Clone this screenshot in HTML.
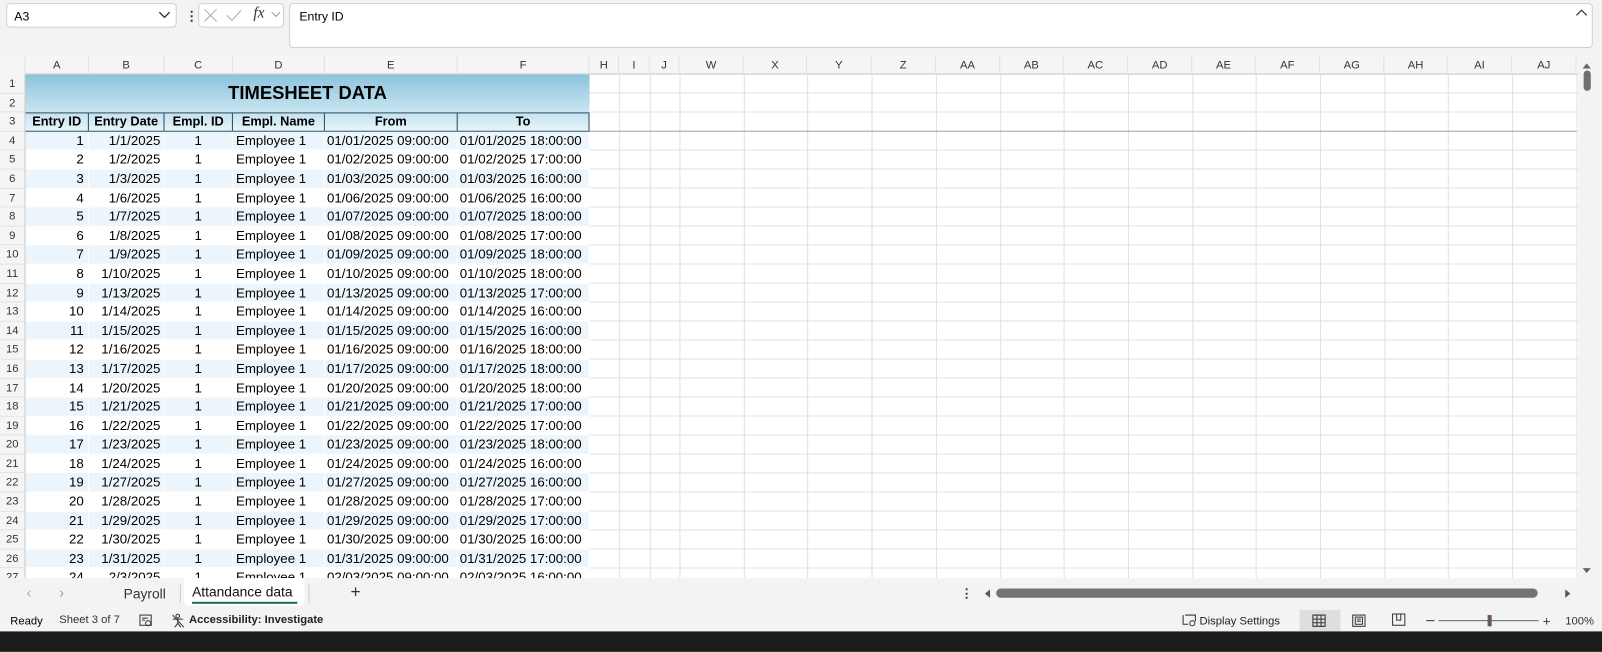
<!DOCTYPE html>
<html><head><meta charset="utf-8">
<style>
*{box-sizing:border-box;margin:0;padding:0}
body{width:1602px;height:638px;overflow:hidden;background:#f3f3f3;font-family:"Liberation Sans",sans-serif;position:relative;color:#000}
#wrap{position:absolute;left:0;top:0;width:1568px;height:625px;transform:scale(1.0217);transform-origin:0 0}
.abs{position:absolute}
.box{position:absolute;background:#fff;border:1px solid #d0d0d0;border-radius:4px}
#sheet{position:absolute;left:0;top:55px;width:1560px;height:511px;background:#fff;overflow:hidden}
#colhdr{position:absolute;left:0;top:0;height:18px;width:1545px;background:#f5f5f5;border-bottom:1px solid #c8c8c8;font-size:11px;color:#333}
#colhdr div{position:absolute;top:0;height:18px;line-height:18px;text-align:center;border-right:1px solid #e0e0e0}
#rowhdr{position:absolute;left:0;top:18px;width:25px;background:#f5f5f5;border-right:1px solid #c8c8c8;font-size:11px;color:#333}
#rowhdr div{height:18.6px;line-height:18.6px;text-align:center;border-bottom:1px solid #e3e3e3}
#grid{position:absolute;left:577px;top:18px;width:968px;height:500px;background:repeating-linear-gradient(to bottom,transparent 0,transparent 17.6px,#e1e1e1 17.6px,#e1e1e1 18.6px)}
.vl{position:absolute;top:18px;width:1px;height:500px;background:#e1e1e1}
#data{position:absolute;left:25px;top:18px;width:552px;font-size:13px}
.r{display:flex;height:18.6px;line-height:18px;border-bottom:1px solid #fff}
.r div{overflow:hidden;white-space:nowrap;border-right:1px solid #fff}
.r.b{background:#ebf5fb}
.c1{width:62px;text-align:right;padding-right:4px}
.c2{width:74px;text-align:right;padding-right:3px}
.c3{width:67px;text-align:center}
.c4{width:90px;padding-left:3px}
.c5{width:130px;padding-left:2px}
.c6{width:129px;padding-left:2px}
#title{height:37.2px;background:linear-gradient(#8cc3dc,#c9e6f2);text-align:center;font-weight:bold;font-size:18px;line-height:37px}
.h{background:linear-gradient(#c5e3f0,#e6f4fa);font-weight:bold;font-size:12.5px;height:18.6px;display:flex;line-height:17px;border-top:1px solid #2b4a5c;border-bottom:1px solid #2b4a5c}
.h div{text-align:center;border-right:1px solid #2b4a5c;padding:0;white-space:nowrap;overflow:hidden}
</style></head><body><div id="wrap">
<!-- formula bar -->
<div class="box" style="left:6px;top:3px;width:167px;height:24px"></div>
<div class="abs" style="left:14px;top:9px;font-size:12px">A3</div>
<svg class="abs" style="left:155px;top:11px" width="12" height="8"><path d="M1 1 L6 6 L11 1" stroke="#333" fill="none" stroke-width="1.3"/></svg>
<div class="abs" style="left:181px;top:8px;font-size:13px;color:#333;font-weight:bold">⋮</div>
<div class="box" style="left:194px;top:3px;width:84px;height:24px"></div>
<svg class="abs" style="left:199px;top:8px" width="80" height="14"><path d="M1 1 L13 13 M13 1 L1 13" stroke="#aaa" fill="none"/><path d="M23 7 L28 12 L37 2" stroke="#aaa" fill="none"/></svg>
<div class="abs" style="left:248px;top:5px;font-family:'Liberation Serif',serif;font-style:italic;font-size:15px;color:#333">fx</div>
<svg class="abs" style="left:265px;top:11px" width="10" height="7"><path d="M1 1 L5 5 L9 1" stroke="#999" fill="none"/></svg>
<div class="box" style="left:283px;top:3px;width:1276px;height:44px"></div>
<div class="abs" style="left:293px;top:9px;font-size:12px">Entry ID</div>
<svg class="abs" style="left:1542px;top:8px" width="12" height="8"><path d="M1 7 L6 2 L11 7" stroke="#333" fill="none" stroke-width="1.2"/></svg>

<div id="sheet">
<div id="colhdr">
<div style="left:0;width:25px;background:#f5f5f5"></div>
<div style="left:25px;width:62px">A</div><div style="left:87px;width:74px">B</div><div style="left:161px;width:67px">C</div><div style="left:228px;width:90px">D</div><div style="left:318px;width:130px">E</div><div style="left:448px;width:129px">F</div><div style="left:577px;width:29px">H</div><div style="left:606px;width:30px">I</div><div style="left:636px;width:29px">J</div><div style="left:665px;width:63px">W</div><div style="left:728px;width:62px">X</div><div style="left:790px;width:63px">Y</div><div style="left:853px;width:63px">Z</div><div style="left:916px;width:63px">AA</div><div style="left:979px;width:62px">AB</div><div style="left:1041px;width:63px">AC</div><div style="left:1104px;width:63px">AD</div><div style="left:1167px;width:62px">AE</div><div style="left:1229px;width:63px">AF</div><div style="left:1292px;width:63px">AG</div><div style="left:1355px;width:62px">AH</div><div style="left:1417px;width:63px">AI</div><div style="left:1480px;width:63px">AJ</div>
</div>
<div id="grid"></div>
<div class="vl" style="left:606px"></div><div class="vl" style="left:636px"></div><div class="vl" style="left:665px"></div><div class="vl" style="left:728px"></div><div class="vl" style="left:790px"></div><div class="vl" style="left:853px"></div><div class="vl" style="left:916px"></div><div class="vl" style="left:979px"></div><div class="vl" style="left:1041px"></div><div class="vl" style="left:1104px"></div><div class="vl" style="left:1167px"></div><div class="vl" style="left:1229px"></div><div class="vl" style="left:1292px"></div><div class="vl" style="left:1355px"></div><div class="vl" style="left:1417px"></div><div class="vl" style="left:1480px"></div><div class="vl" style="left:1543px"></div>
<div class="abs" style="left:25px;top:73px;width:1518px;height:1px;background:#a8a8a8"></div>
<div id="rowhdr">
<div>1</div><div>2</div><div>3</div><div>4</div><div>5</div><div>6</div><div>7</div><div>8</div><div>9</div><div>10</div><div>11</div><div>12</div><div>13</div><div>14</div><div>15</div><div>16</div><div>17</div><div>18</div><div>19</div><div>20</div><div>21</div><div>22</div><div>23</div><div>24</div><div>25</div><div>26</div><div>27</div>
</div>
<div id="data">
<div id="title">TIMESHEET DATA</div>
<div class="h"><div class="c1" style="text-align:center;padding:0">Entry ID</div><div class="c2" style="text-align:center;padding:0">Entry Date</div><div class="c3">Empl. ID</div><div class="c4" style="padding:0">Empl. Name</div><div class="c5" style="padding:0">From</div><div class="c6" style="padding:0">To</div></div>
<div class="r b"><div class="c1">1</div><div class="c2">1/1/2025</div><div class="c3">1</div><div class="c4">Employee 1</div><div class="c5">01/01/2025 09:00:00</div><div class="c6">01/01/2025 18:00:00</div></div>
<div class="r"><div class="c1">2</div><div class="c2">1/2/2025</div><div class="c3">1</div><div class="c4">Employee 1</div><div class="c5">01/02/2025 09:00:00</div><div class="c6">01/02/2025 17:00:00</div></div>
<div class="r b"><div class="c1">3</div><div class="c2">1/3/2025</div><div class="c3">1</div><div class="c4">Employee 1</div><div class="c5">01/03/2025 09:00:00</div><div class="c6">01/03/2025 16:00:00</div></div>
<div class="r"><div class="c1">4</div><div class="c2">1/6/2025</div><div class="c3">1</div><div class="c4">Employee 1</div><div class="c5">01/06/2025 09:00:00</div><div class="c6">01/06/2025 16:00:00</div></div>
<div class="r b"><div class="c1">5</div><div class="c2">1/7/2025</div><div class="c3">1</div><div class="c4">Employee 1</div><div class="c5">01/07/2025 09:00:00</div><div class="c6">01/07/2025 18:00:00</div></div>
<div class="r"><div class="c1">6</div><div class="c2">1/8/2025</div><div class="c3">1</div><div class="c4">Employee 1</div><div class="c5">01/08/2025 09:00:00</div><div class="c6">01/08/2025 17:00:00</div></div>
<div class="r b"><div class="c1">7</div><div class="c2">1/9/2025</div><div class="c3">1</div><div class="c4">Employee 1</div><div class="c5">01/09/2025 09:00:00</div><div class="c6">01/09/2025 18:00:00</div></div>
<div class="r"><div class="c1">8</div><div class="c2">1/10/2025</div><div class="c3">1</div><div class="c4">Employee 1</div><div class="c5">01/10/2025 09:00:00</div><div class="c6">01/10/2025 18:00:00</div></div>
<div class="r b"><div class="c1">9</div><div class="c2">1/13/2025</div><div class="c3">1</div><div class="c4">Employee 1</div><div class="c5">01/13/2025 09:00:00</div><div class="c6">01/13/2025 17:00:00</div></div>
<div class="r"><div class="c1">10</div><div class="c2">1/14/2025</div><div class="c3">1</div><div class="c4">Employee 1</div><div class="c5">01/14/2025 09:00:00</div><div class="c6">01/14/2025 16:00:00</div></div>
<div class="r b"><div class="c1">11</div><div class="c2">1/15/2025</div><div class="c3">1</div><div class="c4">Employee 1</div><div class="c5">01/15/2025 09:00:00</div><div class="c6">01/15/2025 16:00:00</div></div>
<div class="r"><div class="c1">12</div><div class="c2">1/16/2025</div><div class="c3">1</div><div class="c4">Employee 1</div><div class="c5">01/16/2025 09:00:00</div><div class="c6">01/16/2025 18:00:00</div></div>
<div class="r b"><div class="c1">13</div><div class="c2">1/17/2025</div><div class="c3">1</div><div class="c4">Employee 1</div><div class="c5">01/17/2025 09:00:00</div><div class="c6">01/17/2025 18:00:00</div></div>
<div class="r"><div class="c1">14</div><div class="c2">1/20/2025</div><div class="c3">1</div><div class="c4">Employee 1</div><div class="c5">01/20/2025 09:00:00</div><div class="c6">01/20/2025 18:00:00</div></div>
<div class="r b"><div class="c1">15</div><div class="c2">1/21/2025</div><div class="c3">1</div><div class="c4">Employee 1</div><div class="c5">01/21/2025 09:00:00</div><div class="c6">01/21/2025 17:00:00</div></div>
<div class="r"><div class="c1">16</div><div class="c2">1/22/2025</div><div class="c3">1</div><div class="c4">Employee 1</div><div class="c5">01/22/2025 09:00:00</div><div class="c6">01/22/2025 17:00:00</div></div>
<div class="r b"><div class="c1">17</div><div class="c2">1/23/2025</div><div class="c3">1</div><div class="c4">Employee 1</div><div class="c5">01/23/2025 09:00:00</div><div class="c6">01/23/2025 18:00:00</div></div>
<div class="r"><div class="c1">18</div><div class="c2">1/24/2025</div><div class="c3">1</div><div class="c4">Employee 1</div><div class="c5">01/24/2025 09:00:00</div><div class="c6">01/24/2025 16:00:00</div></div>
<div class="r b"><div class="c1">19</div><div class="c2">1/27/2025</div><div class="c3">1</div><div class="c4">Employee 1</div><div class="c5">01/27/2025 09:00:00</div><div class="c6">01/27/2025 16:00:00</div></div>
<div class="r"><div class="c1">20</div><div class="c2">1/28/2025</div><div class="c3">1</div><div class="c4">Employee 1</div><div class="c5">01/28/2025 09:00:00</div><div class="c6">01/28/2025 17:00:00</div></div>
<div class="r b"><div class="c1">21</div><div class="c2">1/29/2025</div><div class="c3">1</div><div class="c4">Employee 1</div><div class="c5">01/29/2025 09:00:00</div><div class="c6">01/29/2025 17:00:00</div></div>
<div class="r"><div class="c1">22</div><div class="c2">1/30/2025</div><div class="c3">1</div><div class="c4">Employee 1</div><div class="c5">01/30/2025 09:00:00</div><div class="c6">01/30/2025 16:00:00</div></div>
<div class="r b"><div class="c1">23</div><div class="c2">1/31/2025</div><div class="c3">1</div><div class="c4">Employee 1</div><div class="c5">01/31/2025 09:00:00</div><div class="c6">01/31/2025 17:00:00</div></div>
<div class="r"><div class="c1">24</div><div class="c2">2/3/2025</div><div class="c3">1</div><div class="c4">Employee 1</div><div class="c5">02/03/2025 09:00:00</div><div class="c6">02/03/2025 16:00:00</div></div>
</div>
<!-- vertical scrollbar -->
<div class="abs" style="left:1545px;top:0;width:15px;height:511px;background:#f3f3f3"></div>
<svg class="abs" style="left:1548px;top:5px" width="10" height="8"><path d="M1 7 L5 2 L9 7Z" fill="#666"/></svg>
<div class="abs" style="left:1550px;top:14px;width:7px;height:20px;border-radius:4px;background:#707070"></div>
<svg class="abs" style="left:1548px;top:500px" width="10" height="8"><path d="M1 1 L5 6 L9 1Z" fill="#666"/></svg>
</div>

<!-- tabs -->
<div class="abs" style="left:0;top:566px;width:1602px;height:31px;background:#f3f3f3"></div>
<div class="abs" style="left:26px;top:572px;font-size:14px;color:#aaa">‹</div>
<div class="abs" style="left:58px;top:572px;font-size:14px;color:#999">›</div>
<div class="abs" style="left:121px;top:574px;font-size:13.5px;color:#333">Payroll</div>
<div class="abs" style="left:176px;top:572px;width:1px;height:18px;background:#ccc"></div>
<div class="abs" style="left:180px;top:566px;width:118px;height:27px;background:#fff;border-radius:0 0 5px 5px"></div>
<div class="abs" style="left:188px;top:572px;font-size:13.5px;color:#111">Attandance data</div>
<div class="abs" style="left:188px;top:589px;width:103px;height:2px;background:#1e7145"></div>
<div class="abs" style="left:302px;top:572px;width:1px;height:18px;background:#ccc"></div>
<div class="abs" style="left:343px;top:570px;font-size:17px;color:#333">+</div>
<div class="abs" style="left:940px;top:574px;font-size:12px;font-weight:bold;color:#333">⋮</div>
<svg class="abs" style="left:962px;top:576px" width="8" height="10"><path d="M7 1 L2 5 L7 9Z" fill="#555"/></svg>
<div class="abs" style="left:975px;top:576px;width:530px;height:9px;border-radius:5px;background:#737373"></div>
<svg class="abs" style="left:1531px;top:576px" width="8" height="10"><path d="M1 1 L6 5 L1 9Z" fill="#555"/></svg>

<!-- status bar -->
<div class="abs" style="left:0;top:597px;width:1602px;height:21px;background:#f3f3f3"></div>
<div class="abs" style="left:10px;top:602px;font-size:11px">Ready</div>
<div class="abs" style="left:58px;top:601px;font-size:11px;color:#333">Sheet 3 of 7</div>
<svg class="abs" style="left:136px;top:601px" width="14" height="13"><rect x="1" y="1" width="11" height="10" fill="none" stroke="#333"/><path d="M3 4h6M3 6h3" stroke="#333"/><circle cx="9" cy="9" r="2.5" fill="none" stroke="#333"/></svg>
<svg class="abs" style="left:167px;top:600px" width="15" height="15"><circle cx="7" cy="3" r="1.8" fill="none" stroke="#333"/><path d="M2 6h10M7 6v4l-3 4M7 10l3 4M2 2l11 12" stroke="#333" fill="none"/></svg>
<div class="abs" style="left:185px;top:601px;font-size:11px;font-weight:bold;color:#222">Accessibility: Investigate</div>
<svg class="abs" style="left:1157px;top:601px" width="15" height="13"><path d="M1 1v9h5M3 1h10v6" stroke="#333" fill="none"/><circle cx="10" cy="9" r="2.5" fill="none" stroke="#333"/></svg>
<div class="abs" style="left:1174px;top:602px;font-size:11px;color:#222">Display Settings</div>
<div class="abs" style="left:1272px;top:597px;width:40px;height:21px;background:#dedede"></div>
<svg class="abs" style="left:1284px;top:601px" width="14" height="13"><path d="M1 1h12v11H1zM1 5h12M1 8.5h12M5 1v11M9 1v11" stroke="#333" fill="none"/></svg>
<svg class="abs" style="left:1323px;top:601px" width="14" height="13"><rect x="1" y="1" width="12" height="11" fill="none" stroke="#333"/><rect x="3.5" y="3" width="7" height="7" fill="none" stroke="#333"/><path d="M5 5h4M5 7h4" stroke="#333"/></svg>
<svg class="abs" style="left:1362px;top:600px" width="14" height="13"><path d="M1 1h12v11H1zM5 1v6h4V1" stroke="#333" fill="none"/></svg>
<div class="abs" style="left:1396px;top:607px;width:8px;height:1px;background:#333"></div>
<div class="abs" style="left:1408px;top:607px;width:98px;height:1px;background:#666"></div>
<div class="abs" style="left:1456px;top:602px;width:4px;height:11px;background:#6b5a5a"></div>
<div class="abs" style="left:1510px;top:600px;font-size:13px;color:#333">+</div>
<div class="abs" style="left:1532px;top:602px;font-size:11px;color:#333">100%</div>
<div class="abs" style="left:0;top:618px;width:1602px;height:20px;background:#1c1c1c"></div>
</div></body></html>
